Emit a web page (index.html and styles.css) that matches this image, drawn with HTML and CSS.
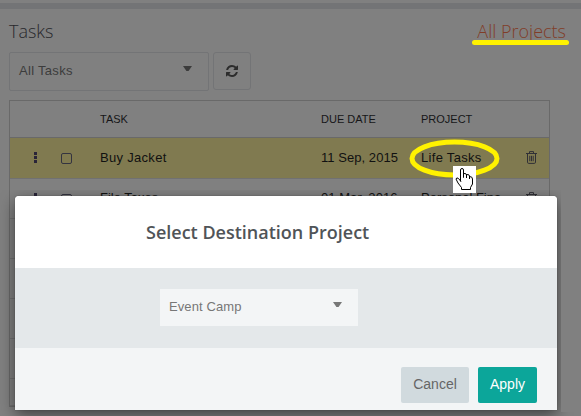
FILE: index.html
```
<!DOCTYPE html>
<html lang="en">
<head>
<meta charset="utf-8">
<title>Tasks</title>
<link rel="stylesheet" href="styles.css">
</head>
<body>
<svg class="defs" width="0" height="0"><defs>
<symbol id="trash" viewBox="0 0 11 13"><path d="M0 2.5h11M3.5 2.2V.6h4v1.6M1.5 3v8.2q0 1.2 1.2 1.2h5.6q1.2 0 1.2-1.2V3M3.8 4.8v5.4M5.5 4.8v5.4M7.2 4.8v5.4" fill="none" stroke="#303036"/></symbol>
</defs></svg>
<main class="page">
  <div class="band"></div>
  <header class="heading"><h1>Tasks</h1><a class="all">All Projects</a></header>
  <div class="toolbar">
    <div class="select"><span>All Tasks</span><i class="caret"></i></div>
    <div class="refresh"><svg width="12" height="12" viewBox="0 0 1536 1536"><path fill="#2c2c2c" d="M1511 928q0 5-1 7-64 268-268 434.500T764 1536q-146 0-282.500-55T238 1324l-129 129q-19 19-45 19t-45-19-19-45V960q0-26 19-45t45-19h448q26 0 45 19t19 45-19 45l-137 137q71 66 161 102t187 36q134 0 250-65t186-179q11-17 53-117 8-23 30-23h192q13 0 22.500 9.500t9.500 22.500zm25-800v448q0 26-19 45t-45 19h-448q-26 0-45-19t-19-45 19-45l138-138Q969 256 768 256q-134 0-250 65T332 500q-11 17-53 117-8 23-30 23H50q-13 0-22.500-9.500T18 608v-7q65-268 270-434.500T768 0q146 0 284 55.500T1297 212l130-129q19-19 45-19t45 19 19 45z"/></svg></div>
  </div>
  <section class="table">
    <div class="row head"><span></span><span></span><span>TASK</span><span>DUE DATE</span><span>PROJECT</span><span></span></div>
    <div class="row active"><span class="dots"><i></i><i></i><i></i></span><span class="check"></span><span>Buy Jacket</span><span class="date">11 Sep, 2015</span><span>Life Tasks</span><svg class="trash" width="11" height="13"><use href="#trash"/></svg></div>
    <div class="row"><span class="dots"><i></i><i></i><i></i></span><span class="check"></span><span class="tight">File Taxes</span><span class="date">01 Mar, 2016</span><span class="tight">Personal Fina</span><svg class="trash" width="11" height="13"><use href="#trash"/></svg></div>
    <div class="row"></div><div class="row"></div><div class="row"></div><div class="row"></div><div class="row last"></div>
  </section>
</main>
<div class="shade"></div>
<div class="gutter"></div>
<section class="modal">
  <header><h2>Select Destination Project</h2></header>
  <div class="body"><div class="select project"><span>Event Camp</span><i class="caret"></i></div></div>
  <footer><button class="cancel">Cancel</button><button class="apply">Apply</button></footer>
</section>
<svg class="marks" width="581" height="416" viewBox="0 0 581 416">
  <path d="M474.500 42.500H566.500" stroke="#fff200" stroke-width="5" stroke-linecap="round"/>
  <ellipse cx="454.500" cy="158.500" rx="42.500" ry="16.500" fill="none" stroke="#fff200" stroke-width="5"/>
  <path d="M453 166h23v27h-23z" fill="#fff"/>
  <path d="M460.500 181.500V170q0-1.500 1.500-1.500t1.500 1.500v7.500V173.500q3-.5 3 1.500v3V174.500q3-.2 3 1.500v3V176.500q3 0 3 2.500v5l-2 3.500v2h-9v-2l-3.500-4.500-2-4q.5-2 2.500-.5l2.500 3" fill="#fff" stroke="#000"/>
</svg>
</body>
</html>
```
FILE: styles.css
```
* { box-sizing: border-box; }
body { margin: 0; width: 581px; height: 416px; overflow: hidden; position: relative; background: #808080; font: 13px "Liberation Sans", Arial, sans-serif; color: #111; }
.defs { position: absolute; }
.page { padding-top: 3px; }
.band { height: 6px; background: #737476; }
.heading { display: flex; justify-content: space-between; height: 43px; padding: 10px 15px 0 9px; }
h1, .all { margin: 0; font: 300 18px/25px "Open Sans", sans-serif; color: #28282c; }
.all { color: #803d28; }
.toolbar { display: flex; gap: 4px; padding-left: 9px; height: 48px; }
.select { display: flex; justify-content: space-between; width: 200px; height: 39px; padding: 0 15px 0 9px; border: 1px solid #737476; border-radius: 2px; line-height: 36px; color: #3c3c3c; letter-spacing: .3px; }
.caret { width: 9px; height: 5px; margin: 13px 1px 0 0; background: #3c3c3c; clip-path: polygon(0 0, 100% 0, 62% 100%, 38% 100%); }
.refresh { width: 38px; height: 38px; border: 1px solid #737476; border-radius: 3px; display: flex; align-items: center; justify-content: center; }
.table { width: 541px; margin-left: 9px; border: 1px solid #696969; }
.row { display: grid; grid-template-columns: 40px 50px 221px 100px 105px 1fr; height: 40px; line-height: 38px; border-bottom: 1px solid #717171; letter-spacing: .3px; white-space: nowrap; }
.head { height: 37px; line-height: 36px; font-size: 11px; letter-spacing: 0; border-color: #696969; color: #161618; }
.active { height: 41px; background: #807a50; line-height: 39px; }
.last { height: 27px; }
.date { letter-spacing: .05px; }
.tight { letter-spacing: 0; }
.dots { display: flex; flex-direction: column; gap: 1px; padding: 14px 0 0 24px; }
.dots i { width: 3px; height: 3px; background: #292438; }
.check { width: 11px; height: 11px; margin: 15px 0 0 11px; border: 1px solid #343440; border-radius: 2px; }
.trash { margin: 13px 0 0; }
.shade { position: absolute; left: 0; top: 190px; width: 581px; height: 226px; overflow: hidden; }
.shade::before { content: ""; position: absolute; left: 15px; top: 6px; width: 542px; height: 214px; border-radius: 5px; box-shadow: 0 5px 15px rgba(0,0,0,.5); }
.gutter { position: absolute; left: 561px; top: 190px; width: 20px; height: 222px; background: #808080; }
.modal { position: absolute; left: 15px; top: 196px; width: 542px; height: 214px; border-radius: 4px 4px 0 0; overflow: hidden; background: #f3f5f6; box-shadow: 0 0 1px #333; }
.modal header { height: 72px; background: #fff; padding: 24px 0 0 131px; }
h2 { margin: 0; font: 600 18px/25px "Open Sans", sans-serif; color: #505458; }
.body { height: 80px; background: #e4e8ea; padding: 21px 0 0 145px; }
.project { width: 198px; height: 37px; border: 0; border-radius: 0; background: #f3f5f6; color: #777; letter-spacing: .1px; }
.project .caret { background: #777; }
footer { display: flex; justify-content: flex-end; gap: 9px; padding: 19px 20px 0 0; }
button { height: 36px; border: 0; border-radius: 2px; padding: 0 0 2px; font: 14px "Liberation Sans", Arial, sans-serif; }
.cancel { width: 68px; background: #d1dade; color: #666; }
.apply { width: 59px; background: #0ca69a; color: #fff; }
.marks { position: absolute; left: 0; top: 0; }
```
